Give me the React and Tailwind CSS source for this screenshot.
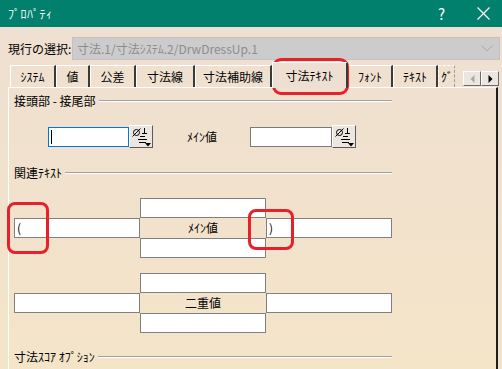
import React from 'react';

const jp = { fontFamily: '"Noto Sans CJK JP", "Noto Sans", sans-serif' };

const tabs = [
  { label: 'ｼｽﾃﾑ', w: 'w-[46px]' },
  { label: '値', w: 'w-[34px]' },
  { label: '公差', w: 'w-[46px]' },
  { label: '寸法線', w: 'w-[59px]' },
  { label: '寸法補助線', w: 'w-[77px]' },
  { label: '寸法ﾃｷｽﾄ', w: 'w-[76px]', active: true },
  { label: 'ﾌｫﾝﾄ', w: 'w-[45px]' },
  { label: 'ﾃｷｽﾄ', w: 'w-[45px]' },
];

function SymbolButton() {
  return (
    <button className="w-[24px] h-[23px] bg-[#ECE6E0] border-t border-l border-t-white border-l-white border-r border-b border-r-[#5a5a5a] border-b-[#5a5a5a] p-0">
      <svg width="22" height="21" viewBox="0 0 22 21" className="block">
        <circle cx="6.5" cy="6.5" r="3" fill="none" stroke="#000" strokeWidth="1" />
        <line x1="2.5" y1="10.5" x2="10.5" y2="2.5" stroke="#000" strokeWidth="1" />
        <line x1="14.5" y1="2" x2="14.5" y2="7" stroke="#000" strokeWidth="1" />
        <line x1="12" y1="7.5" x2="17" y2="7.5" stroke="#000" strokeWidth="1" />
        <line x1="10" y1="10.5" x2="15" y2="10.5" stroke="#000" strokeWidth="1" />
        <line x1="8" y1="13.5" x2="17" y2="13.5" stroke="#000" strokeWidth="1" />
        <line x1="9" y1="16.5" x2="16" y2="16.5" stroke="#000" strokeWidth="1" />
        <polygon points="15,17 21,17 18,20.5" fill="#000" />
      </svg>
    </button>
  );
}

function GroupHeader({ children }) {
  return (
    <div className="flex items-center w-[378px] h-[16px] text-[12px] leading-[16px] text-black">
      <span className="whitespace-nowrap">{children}</span>
      <div className="flex-1 ml-[3px] border-t border-t-[#a0a0a0] border-b border-b-white" />
    </div>
  );
}

function Box({ children }) {
  return (
    <div className="h-[20px] bg-white border border-[#808080] text-[12px] leading-[18px] pl-[2px] text-black">
      {children}
    </div>
  );
}

function TextGrid({ label, left, right }) {
  return (
    <div className="grid grid-cols-[126px_126px_126px] grid-rows-[20px_20px_20px] w-[378px]">
      <div />
      <Box />
      <div />
      <Box>{left}</Box>
      <div className="flex items-center justify-center text-[12px] text-black">{label}</div>
      <Box>{right}</Box>
      <div />
      <Box />
      <div />
    </div>
  );
}

export default function App() {
  return (
    <div
      className="relative w-[502px] h-[369px] overflow-hidden bg-gradient-to-b from-[#EEDFD2] to-[#F4E4C8]"
      style={jp}
    >
      {/* Title bar */}
      <div className="h-[27px] bg-[#00806D] flex items-center text-white">
        <span className="ml-[8px] text-[12px] tracking-[0.5px]">ﾌﾟﾛﾊﾟﾃｨ</span>
        <span className="ml-auto mr-[32px] text-[15px] leading-none">?</span>
        <svg width="13" height="13" viewBox="0 0 13 13" className="mr-[12px]">
          <line x1="0.5" y1="0.5" x2="12.5" y2="12.5" stroke="#fff" strokeWidth="1.2" />
          <line x1="12.5" y1="0.5" x2="0.5" y2="12.5" stroke="#fff" strokeWidth="1.2" />
        </svg>
      </div>

      {/* Current selection */}
      <div className="flex items-center mt-[10px] h-[23px]">
        <span className="ml-[8px] w-[64px] text-[12px] text-black whitespace-nowrap">現行の選択:</span>
        <div className="flex-1 h-[23px] mr-[2px] bg-[#CCCCCC] border border-[#C2C2C2] flex items-center">
          <span className="ml-[4px] text-[12px] text-[#8C8C8C] whitespace-nowrap">寸法.1/寸法ｼｽﾃﾑ.2/DrwDressUp.1</span>
          <svg width="12" height="7" viewBox="0 0 12 7" className="ml-auto mr-[6px]">
            <polyline points="0.5,0.5 6,6 11.5,0.5" fill="none" stroke="#A8A8A8" strokeWidth="1" />
          </svg>
        </div>
      </div>

      {/* Tabs */}
      <div className="flex items-end h-[24px] mt-[3px] pl-[10px]">
        {tabs.map((t) => (
          <div
            key={t.label}
            className={
              t.active
                ? `${t.w} h-[26px] -mb-[1px] relative z-10 flex items-center justify-center text-[12px] text-black border-t border-l border-t-white border-l-white border-r-2 border-r-[#3a3a3a] bg-[#EEDFD2]`
                : `${t.w} h-[22px] flex items-center justify-center text-[12px] text-black border-t border-l border-t-white border-l-white border-r-2 border-r-[#3a3a3a]`
            }
          >
            {t.label}
          </div>
        ))}
        <div className="w-[17px] h-[22px] overflow-hidden flex items-center pl-[2px] text-[12px] text-black border-t border-l border-t-white border-l-white border-r border-dashed border-r-[#9a9a9a]">
          ｸﾞ
        </div>
        <div className="ml-[8px] mb-[1px] flex">
          <div className="w-[18px] h-[15px] bg-[#ECE6E0] border-t border-l border-t-white border-l-white border-r border-b border-r-[#6a6a6a] border-b-[#6a6a6a] flex items-center justify-center">
            <svg width="5" height="8" viewBox="0 0 5 8"><polygon points="4.5,0 4.5,8 0.5,4" fill="#A8A8A8" /></svg>
          </div>
          <div className="w-[18px] h-[15px] bg-[#ECE6E0] border-t border-l border-t-white border-l-white border-r border-b border-r-[#6a6a6a] border-b-[#6a6a6a] flex items-center justify-center">
            <svg width="5" height="8" viewBox="0 0 5 8"><polygon points="0.5,0 0.5,8 4.5,4" fill="#000" /></svg>
          </div>
        </div>
      </div>

      {/* Panel */}
      <div className="ml-[8px] w-[490px] h-[300px] border-t border-l border-t-white border-l-white border-r-2 border-r-[#1e1e1e] pl-[5px] pt-[5px]">
        <GroupHeader>接頭部 - 接尾部</GroupHeader>

        <div className="flex items-center mt-[16px] h-[23px]">
          <div className="ml-[34px] w-[81px] h-[20px] bg-white border border-[#0078D7] flex items-center">
            <div className="ml-[2px] w-[1px] h-[14px] bg-black" />
          </div>
          <SymbolButton />
          <span className="ml-[34px] w-[63px] text-[12px] text-black">ﾒｲﾝ値</span>
          <div className="w-[82px] h-[20px] bg-white border border-[#7A7A7A]" />
          <SymbolButton />
        </div>

        <div className="mt-[17px]">
          <GroupHeader>関連ﾃｷｽﾄ</GroupHeader>
        </div>

        <div className="mt-[17px]">
          <TextGrid label="ﾒｲﾝ値" left="(" right=")" />
        </div>
        <div className="mt-[15px]">
          <TextGrid label="二重値" />
        </div>

        <div className="mt-[16px]">
          <GroupHeader>寸法ｽｺｱ ｵﾌﾟｼｮﾝ</GroupHeader>
        </div>
      </div>

      {/* Red annotation marks */}
      <div className="absolute left-[272px] top-[58px] w-[77px] h-[37px] border-[3px] border-[#E8202A] rounded-[9px]" />
      <div className="absolute left-[7px] top-[202px] w-[42px] h-[52px] border-[3px] border-[#E8202A] rounded-[8px]" />
      <div className="absolute left-[248px] top-[209px] w-[46px] h-[41px] border-[3px] border-[#E8202A] rounded-[8px]" />
    </div>
  );
}
